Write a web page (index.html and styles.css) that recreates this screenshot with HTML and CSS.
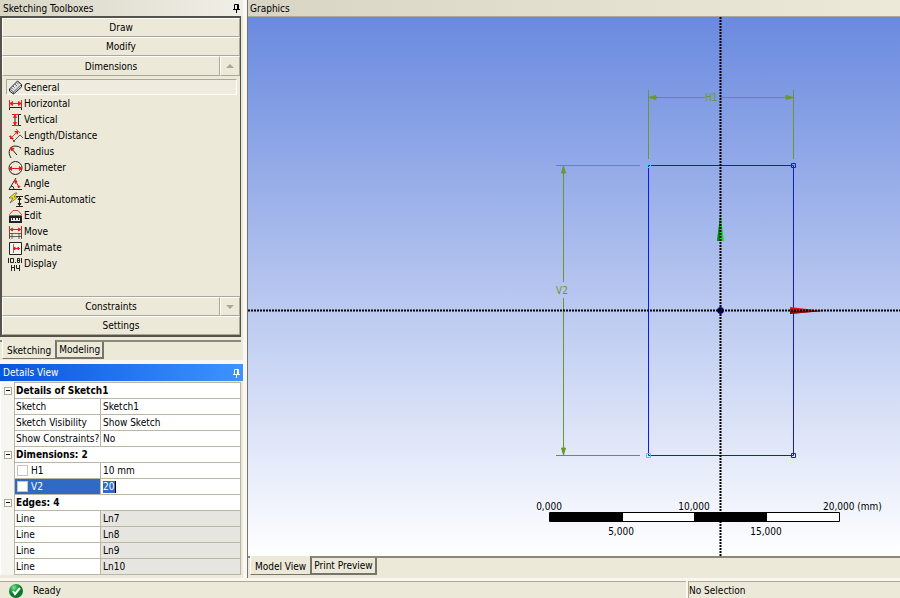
FILE: index.html
```html
<!DOCTYPE html>
<html lang="en">
<head>
<meta charset="utf-8">
<title>Sketching</title>
<link rel="stylesheet" href="styles.css">
</head>
<body>
<div class="workspace">
  <aside class="side">
    <section class="toolbox-pane">
      <header class="pane-title"><span>Sketching Toolboxes</span>
        <button class="pin" aria-label="Pin toolboxes"><svg width="8" height="9"><path d="M2.500 5V.5H6.500V5M5.500 0V5M1 5.500H8M4.500 6V9" fill="none" stroke="currentColor"/></svg></button>
      </header>
      <div class="toolbox">
        <button class="group">Draw</button>
        <button class="group">Modify</button>
        <div class="group-row"><button class="group">Dimensions</button><button class="scroll" aria-label="Scroll up"><svg width="8" height="4"><path d="M0 4L4 0L8 4Z" fill="#aca899"/></svg></button></div>
        <div class="tools">
          <button class="tool selected"><svg width="15" height="15"><path d="M1.500 9L9.500 1L13.500 4.500V7L5.500 14L1.500 11Z" fill="#ddd" stroke="#222"/><path d="M1.500 9L5.500 12L13.500 4.500M5.500 12V14M5 6L6.500 7.500M7 4L9 6M9 2.500L10.500 4M3.500 8L5 9.500" fill="none" stroke="#333" stroke-width=".7"/></svg>General</button>
          <button class="tool"><svg width="15" height="15"><path d="M2 7.500H13M2 7.500L4.500 5.500V9.500ZM13 7.500L10.500 5.500V9.500Z" fill="#f01818" stroke="#f01818"/><path d="M1.500 4V11M13.500 4V11" stroke="#f01818"/><path d="M1.500 14V11.500H13.500V14" fill="none" stroke="#222"/></svg>Horizontal</button>
          <button class="tool"><svg width="15" height="15"><path d="M4 2.500H10M4 13.500H10M7 3L5.500 5.500H8.500ZM7 13L5.500 10.500H8.500Z" fill="#f01818" stroke="#f01818"/><path d="M7 6V10M13 2.500H10.500V13.500H13" fill="none" stroke="#222"/></svg>Vertical</button>
          <button class="tool"><svg width="15" height="15"><path d="M2 11L10 3M1 8L5 12M8 1L12 5" fill="none" stroke="#f01818" stroke-width=".8"/><path d="M2 11V7L6 11ZM10 3V7L6 3Z" fill="#f01818"/><path d="M5 14L12 7L15 10M5 12L7 14" fill="none" stroke="#333" stroke-width=".8"/></svg>Length/Distance</button>
          <button class="tool"><svg width="15" height="15"><path d="M3 14C-1 8 2 2 7 2Q11 2 13 4" fill="none" stroke="#222"/><path d="M3 4L9 11" stroke="#222"/><path d="M2.500 3.500L6 4.500L3.500 7Z" fill="#f01818" stroke="#f01818"/></svg>Radius</button>
          <button class="tool"><svg width="15" height="15"><circle cx="7.500" cy="8" r="6.500" fill="none" stroke="#222"/><path d="M2 8.500H13M1.500 8.500L3.500 6.500V10.500ZM13.500 8.500L11.500 6.500V10.500Z" fill="#f01818" stroke="#f01818"/></svg>Diameter</button>
          <button class="tool"><svg width="15" height="15"><path d="M8 2L1 13.500H14M3 10Q6 10 6 13" fill="none" stroke="#222"/><path d="M6.500 4.500L9 5L7.500 7.500ZM10 10L12 10.500L10.500 12ZM8 6L11 11" fill="#f01818" stroke="#f01818"/></svg>Angle</button>
          <button class="tool"><svg width="15" height="15"><path d="M7 1L1 6H5L2 11L10 5H6L9 1Z" fill="#ffe600" stroke="#555" stroke-width=".7"/><path d="M8 4.500H15M8 14.500H15M11.500 5V14M11.500 5.500L10 7.500H13ZM11.500 13.500L10 11.500H13Z" fill="#222" stroke="#222"/></svg>Semi-Automatic</button>
          <button class="tool"><svg width="15" height="15"><path d="M1.500 7.500V6.500L5 2.500H10L13.500 6.500V7.500Z" fill="none" stroke="#d84040"/><path d="M2 9H13V14H2Z" fill="#eee" stroke="#222" stroke-width="2"/><path d="M4.500 10V12M7.500 10V12M10.500 10V12" stroke="#222"/></svg>Edit</button>
          <button class="tool"><svg width="15" height="15"><path d="M1.500 2V14M13.500 2V14M2 5.500H13M2.500 5.500L4.500 4V7ZM12.500 5.500L10.500 4V7Z" fill="#e02020" stroke="#e02020"/><path d="M1.500 15V9.500H13.500V15M2 12.500H13M4 9V15M11 9V15" fill="none" stroke="#444" stroke-width=".8"/></svg>Move</button>
          <button class="tool"><svg width="15" height="15"><path d="M1.500 2.500H13.500V14.500H1.500Z" fill="#f6f4ec" stroke="#222"/><path d="M5.500 4V13" stroke="#222" stroke-width=".6"/><path d="M5 8.500H12M5.500 8.500L7 7V10ZM11.500 8.500L10 7V10Z" fill="#f01818" stroke="#f01818"/></svg>Animate</button>
          <button class="tool"><svg width="15" height="15"><path d="M.5 2V7M2.500 2.500H5.500V6.500H2.500ZM7 6.500H8M9.500 2.500H11.500V6.500H9.500ZM9 4.500H12M13.500 2V7M3.500 9V15M6.500 9V15M3 11.500H7M8.500 9V12.500H12M11.500 9V15" fill="none" stroke="#222"/></svg>Display</button>
        </div>
        <div class="group-row lower"><button class="group">Constraints</button><button class="scroll" aria-label="Scroll down"><svg width="8" height="4"><path d="M0 0L4 4L8 0Z" fill="#aca899"/></svg></button></div>
        <button class="group">Settings</button>
      </div>
      <nav class="tabs side-tabs"><button class="tab active">Sketching</button><button class="tab">Modeling</button></nav>
    </section>
    <section class="details">
      <header class="pane-title details-title"><span>Details View</span>
        <button class="pin" aria-label="Pin details"><svg width="8" height="9"><path d="M2.500 5V.5H6.500V5M5.500 0V5M1 5.500H8M4.500 6V9" fill="none" stroke="currentColor"/></svg></button>
      </header>
      <table class="grid">
        <colgroup><col class="col-toggle"><col class="col-name"><col></colgroup>
        <tbody>
        <tr><td><button class="toggle" aria-label="Collapse Details of Sketch1"></button></td><th colspan="2">Details of Sketch1</th></tr>
        <tr><td></td><td>Sketch</td><td>Sketch1</td></tr>
        <tr><td></td><td>Sketch Visibility</td><td>Show Sketch</td></tr>
        <tr><td></td><td>Show Constraints?</td><td>No</td></tr>
        <tr><td><button class="toggle" aria-label="Collapse Dimensions"></button></td><th colspan="2">Dimensions: 2</th></tr>
        <tr><td></td><td><label class="check"><input type="checkbox">H1</label></td><td>10 mm</td></tr>
        <tr><td></td><td class="current"><label class="check"><input type="checkbox">V2</label></td><td><input class="value" type="text" value="20" aria-label="V2 value"></td></tr>
        <tr><td><button class="toggle" aria-label="Collapse Edges"></button></td><th colspan="2">Edges: 4</th></tr>
        <tr><td></td><td>Line</td><td class="readonly">Ln7</td></tr>
        <tr><td></td><td>Line</td><td class="readonly">Ln8</td></tr>
        <tr><td></td><td>Line</td><td class="readonly">Ln9</td></tr>
        <tr><td></td><td>Line</td><td class="readonly">Ln10</td></tr>
        </tbody>
      </table>
    </section>
  </aside>
  <main class="graphics">
    <header class="pane-title">Graphics</header>
    <svg class="view" width="100%" height="100%">
      <g class="dim">
        <path d="M400.500 73V142M545.500 73V142M401 80.500H457M472 80.500H545M308 148.500H392M308 438.500H392M315.500 149V265M315.500 281V438"/>
        <path class="head" d="M401 80.500L408 78.500V82.500ZM545 80.500L538 78.500V82.500ZM315.500 149L313.500 156H317.500ZM315.500 438L313.500 431H317.500Z"/>
      </g>
      <text class="dim-label" x="457" y="84">H1</text>
      <text class="dim-label" x="308" y="277">V2</text>
      <path class="sketch" d="M400.500 148.500H545.500V438.500H400.500Z"/>
      <path class="start" d="M398.500 146.500H402.500V150.500H398.500ZM398.500 436.500H402.500V440.500H398.500Z"/>
      <path class="end" d="M543.500 146.500H547.500V150.500H543.500ZM543.500 436.500H547.500V440.500H543.500Z"/>
      <path d="M472.500 197L469 224H476Z" fill="#19dc30"/><path d="M472 199L469 224H472Z" fill="#07881b"/>
      <path d="M542 290L575 294L542 297Z" fill="#df1010"/><path d="M542 294H575L542 297Z" fill="#850b0b"/>
      <line class="axis" x1="472.500" y1="0" x2="472.500" y2="100%"/>
      <line class="axis" x1="0" y1="293.500" x2="100%" y2="293.500"/>
      <circle cx="472.500" cy="293.500" r="3" fill="#050528" stroke="#00006c"/>
      <path d="M301.500 495.500H591.500V504.500H301.500Z" fill="#fff" stroke="#000"/>
      <path d="M302 495H375V505H302ZM446 495H519V505H446Z"/>
      <g class="scale"><text x="301" y="493">0,000</text><text x="446" y="493">10,000</text><text x="373" y="518">5,000</text><text x="518" y="518">15,000</text><text class="unit" x="575" y="493">20,000 (mm)</text></g>
    </svg>
    <nav class="tabs"><button class="tab active">Model View</button><button class="tab">Print Preview</button></nav>
  </main>
</div>
<footer class="status">
  <div class="ready"><svg width="14" height="14"><defs><radialGradient id="ball" cx=".35" cy=".25"><stop stop-color="#8be09b"/><stop offset=".5" stop-color="#2aa849"/><stop offset="1" stop-color="#087a2b"/></radialGradient></defs><circle cx="7" cy="7" r="7" fill="url(#ball)"/><path d="M4 7L6 10L11 4" fill="none" stroke="#fff" stroke-width="2"/></svg>Ready</div>
  <div class="selection">No Selection</div>
</footer>
</body>
</html>
```
FILE: styles.css
```css
* { box-sizing: border-box; }
body {
  margin: 0;
  min-height: 100vh;
  display: flex;
  flex-direction: column;
  background: #f8f7f1;
  color: #000;
  font: 10px/14px "DejaVu Sans Condensed", "DejaVu Sans", sans-serif;
}
button {
  margin: 0;
  padding: 0;
  border: 0;
  background: none;
  color: inherit;
  font: inherit;
}
svg { display: block; flex: none; }
.workspace { flex: 1; display: flex; gap: 4px; }
.side { width: 243px; flex: none; display: flex; flex-direction: column; gap: 4px; }
.pane-title {
  height: 16px;
  padding: 1px 3px 0;
  display: flex;
  align-items: center;
  justify-content: space-between;
  background: linear-gradient(90deg, #d8d5c4, #f0efe7);
}
.pin { display: flex; }
.toolbox-pane { height: 360px; background: #ece9d8; display: flex; flex-direction: column; }
.toolbox {
  flex: 1;
  margin-right: 2px;
  display: flex;
  flex-direction: column;
  border: 2px solid #55534a;
  border-width: 2px 1px 2px 2px;
}
.group {
  flex: none;
  height: 19px;
  padding-top: 1px;
  border: 1px solid #aca899;
  border-top-color: #fff;
  border-left-color: #fff;
}
.group-row { display: flex; height: 20px; flex: none; }
.group-row .group { flex: 1; height: 20px; }
.lower { border-top: 1px solid #aca899; }
.lower .group { height: 19px; }
.scroll {
  width: 20px;
  display: flex;
  align-items: center;
  justify-content: center;
  border: 1px solid #aca899;
  border-top-color: #fff;
  border-left-color: #fff;
}
.tools { flex: 1; padding: 3px 3px 0 4px; }
.tool {
  width: 100%;
  height: 16px;
  padding: 1px 1px 0;
  display: flex;
  align-items: center;
  gap: 1px;
  text-align: left;
  border: 1px solid transparent;
}
.tool svg { margin-top: -1px; }
.tool.selected { border-color: #aca899 #fff #fff #aca899; background: #efecdf; }
.tabs {
  height: 22px;
  display: flex;
  align-items: flex-start;
  padding-left: 2px;
  background: #ece9d8;
  border-top: 2px solid #8b897a;
}
.side-tabs { height: 20px; margin: 3px 2px 0 0; }
.tab { height: 17px; padding: 0 2px; border: 1px solid #77756a; border-width: 0 2px 2px 1px; }
.tab.active { height: 19px; margin-top: -2px; padding: 3px 4px 0; background: #ece9d8; border-left-color: #fff; border-width: 0 1px 1px; }
.details { flex: 1; background: #ece9d8; }
.details-title { height: 17px; color: #fff; background: linear-gradient(90deg, #0855dd, #3d94ff); }
.grid {
  width: 241px;
  margin-top: 1px;
  border-collapse: collapse;
  table-layout: fixed;
  background: #fff;
  border: 1px solid #aca899;
}
.col-toggle { width: 14px; }
.col-name { width: 86px; }
.grid tr { height: 16px; }
.grid td, .grid th {
  height: 16px;
  padding: 0 1px;
  border: 1px solid #bab6a3;
  line-height: 14px;
  text-align: left;
  white-space: nowrap;
}
.grid td:last-child { padding-left: 2px; }
.grid td:first-child { padding-left: 3px; border-color: transparent #bab6a3 transparent transparent; background: #f6f5ef; }
.grid .readonly { background: #e7e5e0; }
.grid .current { background: #316ac5; color: #fff; }
.toggle { width: 8px; height: 8px; display: flex; align-items: center; justify-content: center; border: 1px solid #aca899; background: #fff; }
.toggle::before { content: ""; width: 4px; height: 1px; background: #000; }
.check { display: flex; align-items: center; gap: 3px; padding-left: 1px; }
.check input { appearance: none; width: 11px; height: 11px; margin: 0; border: 1px solid #c7c5b9; background: #fff; }
.value { display: block; width: 13px; height: 12px; padding: 0; border: 0; border-right: 1px solid #000; background: #316ac5; color: #fff; font: inherit; }
.graphics { flex: 1; min-width: 0; display: flex; flex-direction: column; border-left: 1px solid #77756a; }
.graphics .pane-title { padding-left: 2px; border-bottom: 1px solid #aca899; height: 17px; background: linear-gradient(90deg, #d8d5c4, #ece9d8); }
.view { flex: 1 1 0; height: 0; background: linear-gradient(#6a8adf, #fff); }
.view text { font-size: 10px; }
.dim { fill: none; stroke: #6c9631; }
.head { fill: #6c9631; }
.view .dim-label { fill: #6c9631; }
.sketch, .start, .end { fill: none; stroke: #1018f0; }
.start { stroke: #19e5f5; }
.axis { stroke: #000; stroke-width: 2; stroke-dasharray: 2 1; }
.scale { text-anchor: middle; }
.view .unit { text-anchor: start; }
.status { height: 17px; margin-top: 3px; display: flex; gap: 2px; background: #f8f7f1; }
.ready, .selection { display: flex; align-items: center; padding-top: 1px; border-top: 1px solid #aca899; background: #ece9d8; }
.ready { flex: 1; gap: 10px; padding-left: 9px; }
.selection { width: 212px; border-left: 1px solid #aca899; }
```
